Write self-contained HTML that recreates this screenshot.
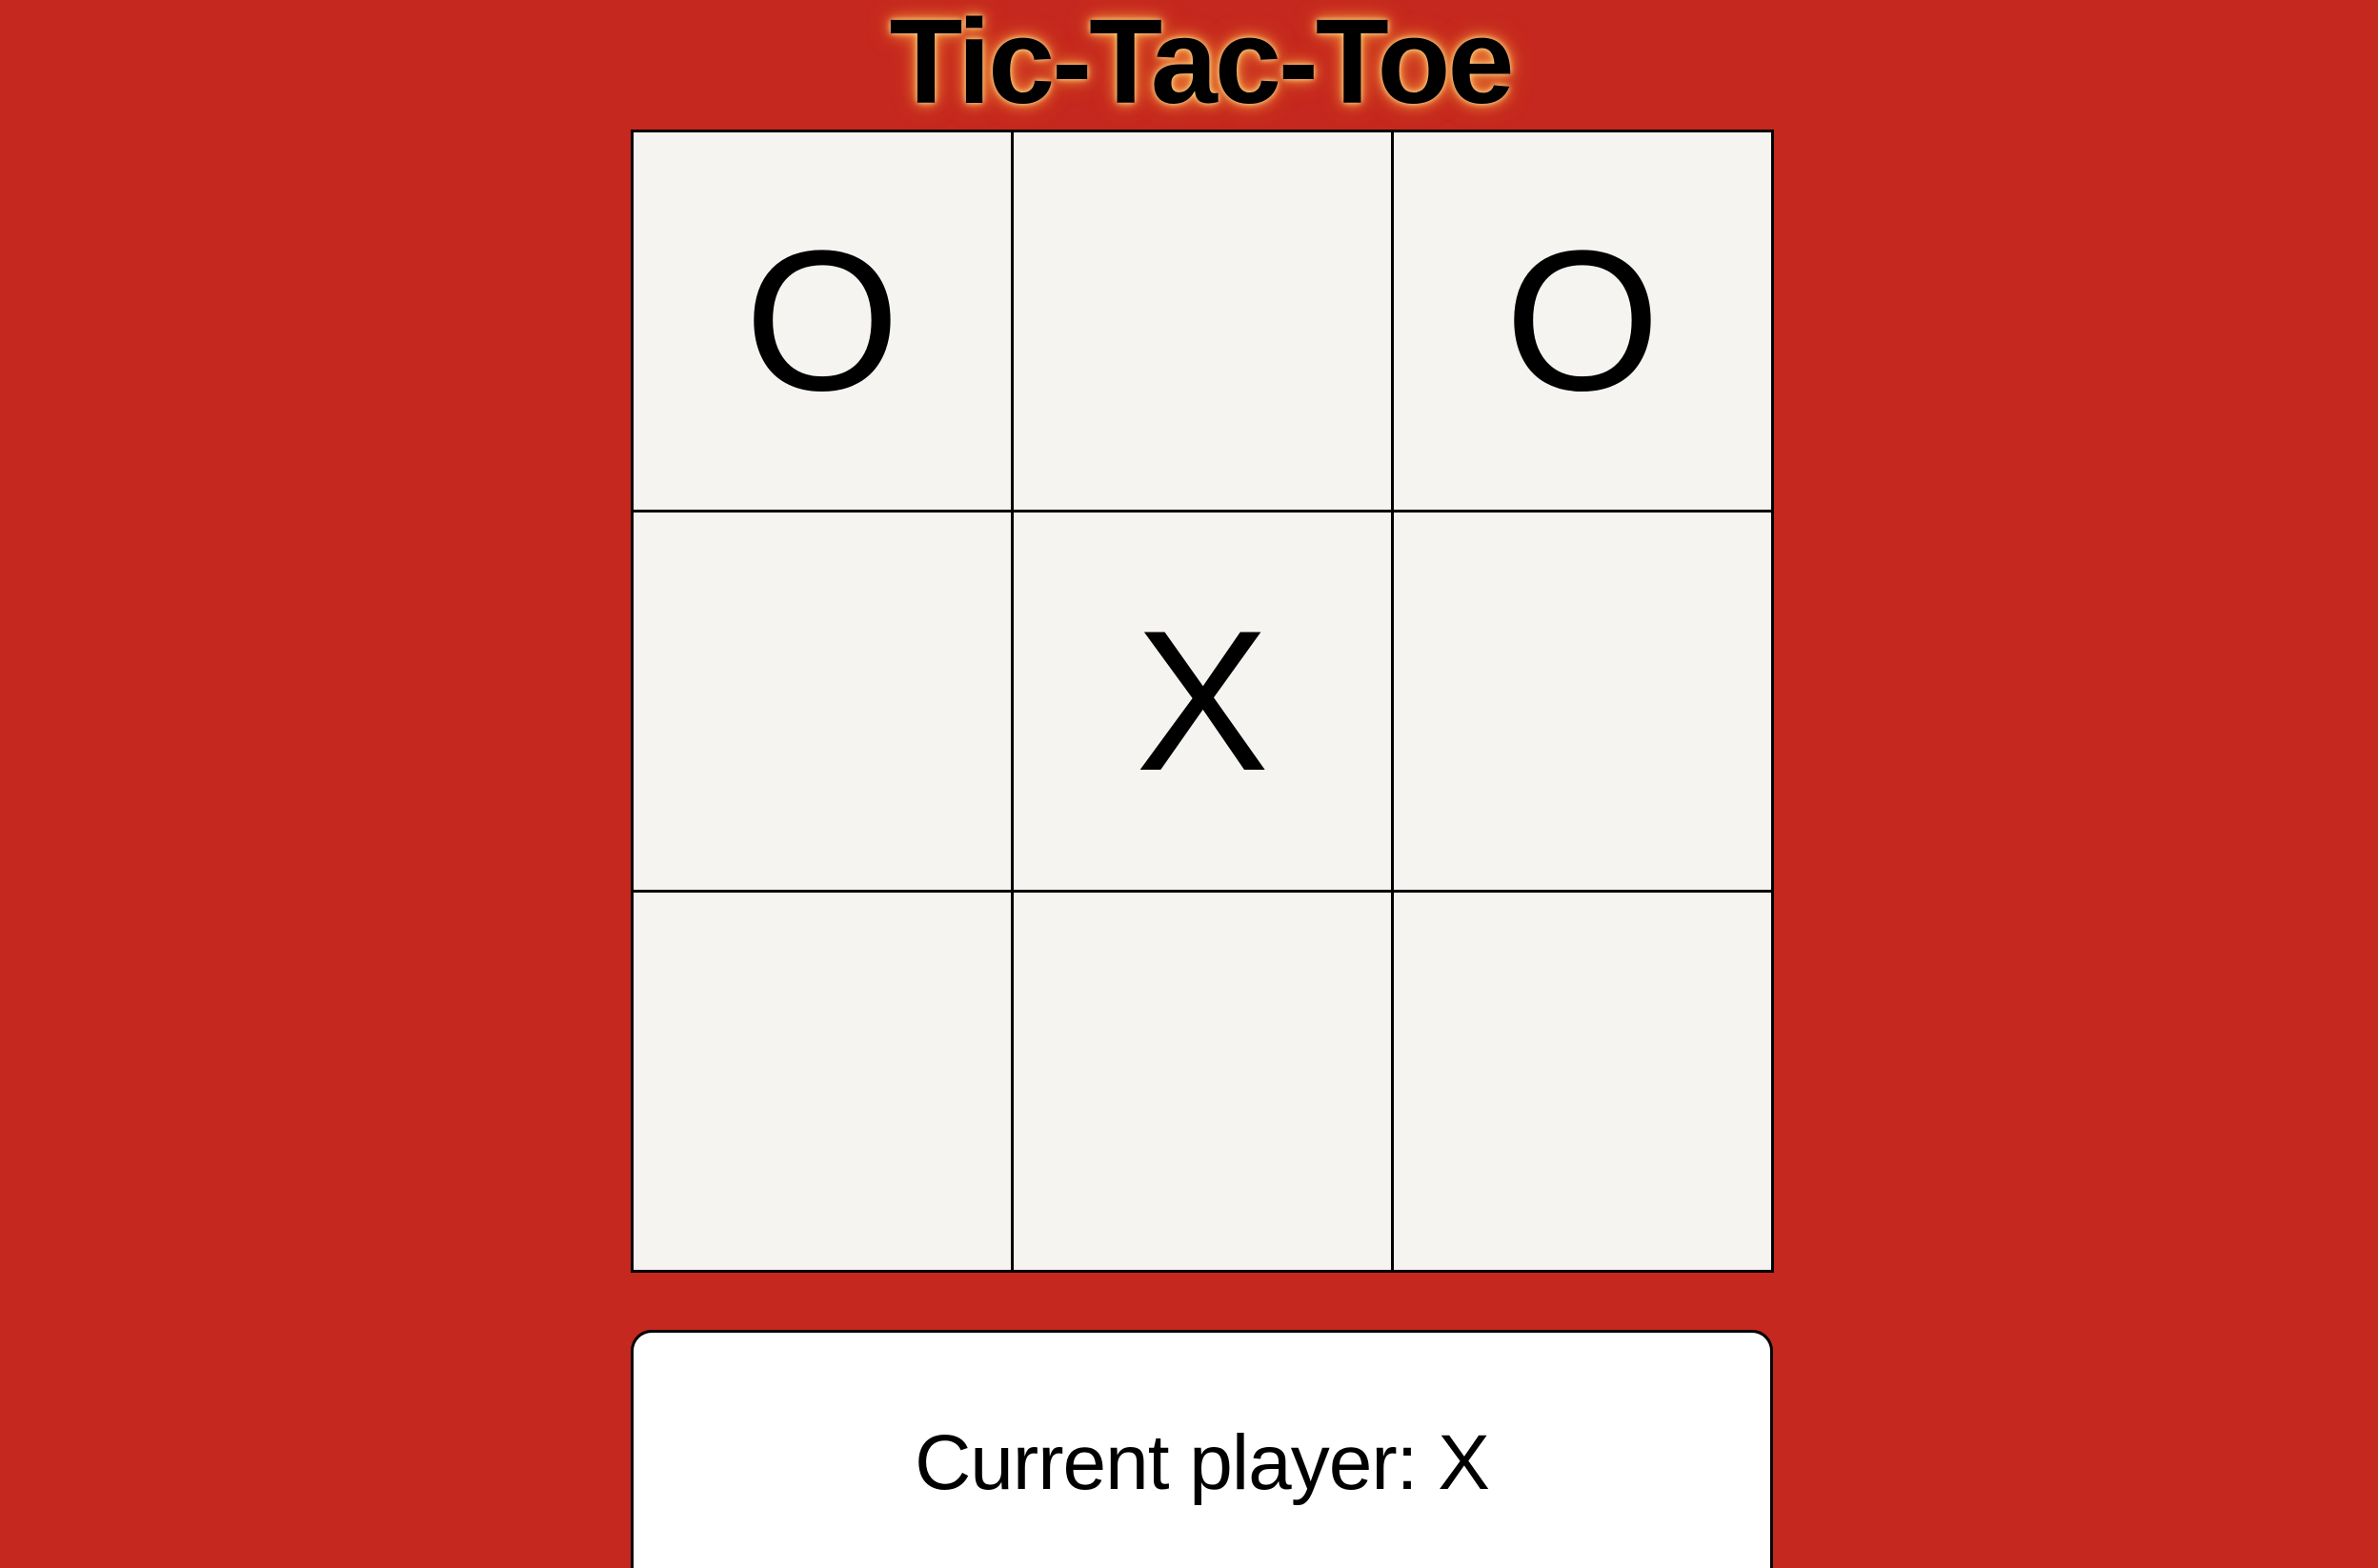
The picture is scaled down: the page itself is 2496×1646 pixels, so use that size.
<!DOCTYPE html>
<html><head><meta charset="utf-8"><style>
html,body{margin:0;padding:0;width:2496px;height:1646px;overflow:hidden;}
body{background:#c5281e;font-family:"Liberation Sans",Arial,sans-serif;position:relative;}
h1{position:absolute;left:12px;width:2496px;top:0;margin:0;text-align:center;font-size:126px;line-height:130px;font-weight:bold;color:#000;letter-spacing:-3px;
text-shadow:0 0 6px #ffe7a0,0 0 14px #f7a040,0 0 24px #e06a2a;}
.board{position:absolute;left:662px;top:136px;width:1200px;height:1200px;background:#000;display:grid;grid-template-columns:396px 396px 396px;grid-template-rows:396px 396px 396px;gap:3px;padding:3px;box-sizing:border-box;}
.c{background:#f5f4f0;display:flex;align-items:center;justify-content:center;font-size:210px;line-height:1;color:#000;}
.status{position:absolute;left:662px;top:1396px;width:1199px;height:250px;box-sizing:border-box;background:#fff;border:3px solid #000;border-bottom:none;border-radius:22px 22px 0 0;text-align:center;}
.status span{position:absolute;left:0;right:0;top:87px;font-size:82px;line-height:100px;color:#000;letter-spacing:-1px;}
</style></head><body>
<h1>Tic-Tac-Toe</h1>
<div class="board">
<div class="c">O</div><div class="c"></div><div class="c">O</div>
<div class="c"></div><div class="c">X</div><div class="c"></div>
<div class="c"></div><div class="c"></div><div class="c"></div>
</div>
<div class="status"><span>Current player: X</span></div>
</body></html>
